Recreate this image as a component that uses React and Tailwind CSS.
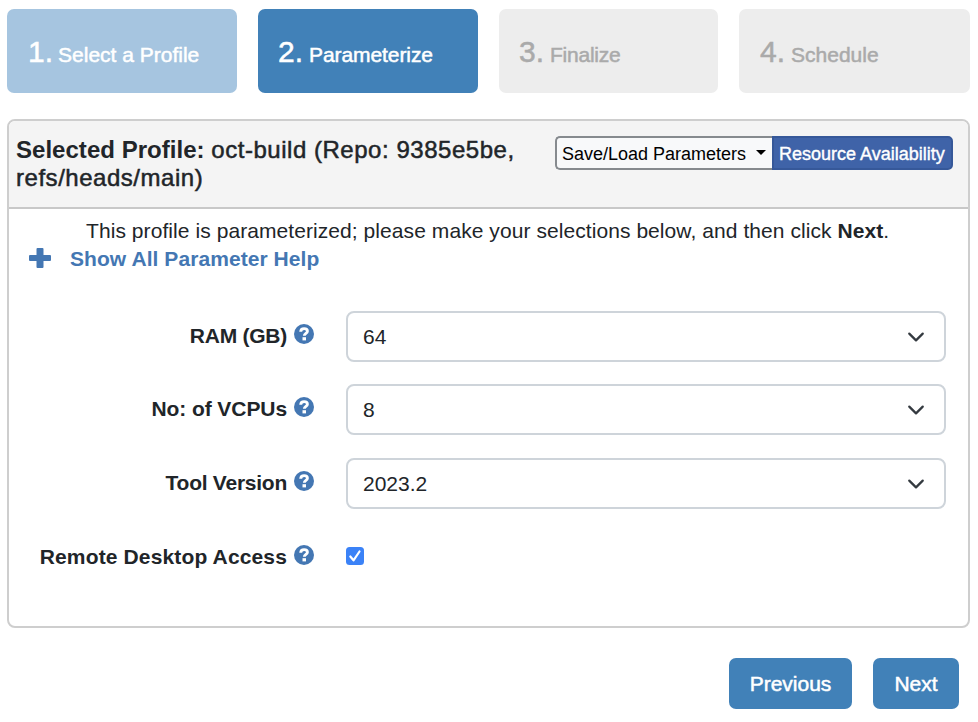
import React from 'react';

const steps = [
  { n: '1.', label: 'Select a Profile', box: 'w-[230px] gap-[5px] bg-[#a6c5e0] text-white', num: 'pl-[21px]', text: '' },
  { n: '2.', label: 'Parameterize', box: 'w-[220px] gap-[6px] bg-[#4181b8] text-white', num: 'pl-[20px]', text: 'tracking-[-0.08px]' },
  { n: '3.', label: 'Finalize', box: 'w-[219px] gap-[6px] bg-[#ededed] text-[#aaaaaa]', num: 'pl-[20px]', text: 'tracking-[-0.25px]' },
  { n: '4.', label: 'Schedule', box: 'w-[231px] gap-[6px] bg-[#ededed] text-[#aaaaaa]', num: 'pl-[21px]', text: '' },
];

function HelpIcon() {
  return (
    <svg className="block h-5 w-5 shrink-0" viewBox="0 0 20 20">
      <circle cx="10" cy="10" r="10" fill="#4477b3" />
      <path d="M6.7 7.700C6.800 5.500 8.200 4.600 10.100 4.600c2 0 3.300 1 3.300 2.600 0 2.200-3.100 2.200-3.100 4.600" fill="none" stroke="#fff" strokeWidth="2.900" />
      <rect x="8.500" y="13.200" width="3.500" height="3.200" fill="#fff" />
    </svg>
  );
}

function Label({ children, tracking }) {
  return (
    <div className="flex h-6 w-[305px] justify-end gap-[7px] pt-[2px] text-[21px] font-bold leading-6">
      <span className={'whitespace-nowrap ' + tracking}>{children}</span>
      <HelpIcon />
    </div>
  );
}

function SelectRow({ label, tracking, value, height }) {
  return (
    <div className={'flex items-start ' + height}>
      <div className="pt-[11px]"><Label tracking={tracking}>{label}</Label></div>
      <div className="ml-8 flex h-[51px] w-[600px] items-center justify-between rounded-[8px] border-2 border-[#ced4da] bg-white pl-[15px] pr-[19px] text-[21px]">
        <span>{value}</span>
        <svg className="h-[18px] w-[18px]" viewBox="0 0 16 16" fill="none" stroke="#343a40" strokeWidth="2" strokeLinecap="round" strokeLinejoin="round">
          <path d="m2 5 6 6 6-6" />
        </svg>
      </div>
    </div>
  );
}

export default function App() {
  return (
    <div className="h-[722px] w-[978px] overflow-hidden bg-white pl-[7px] pr-[8px] pt-[9px] font-['Liberation_Sans',Arial,sans-serif] text-[#212529]">
      <div className="flex justify-between">
        {steps.map((s) => (
          <div key={s.n} className={'flex h-[84px] items-baseline whitespace-nowrap rounded-[7px] pt-[25px] ' + s.box}>
            <span className={'text-[30px] leading-9 [-webkit-text-stroke:0.5px] ' + s.num}>{s.n}</span>
            <span className={'text-[21px] leading-6 [-webkit-text-stroke:0.5px] ' + s.text}>{s.label}</span>
          </div>
        ))}
      </div>

      <div className="mt-[26px] h-[509px] overflow-hidden rounded-[8px] border-2 border-[#cecece] bg-white">
        <div className="flex h-[88px] items-start justify-between border-b-2 border-[#c8c8c8] bg-[#f4f4f4] pl-[7px] pr-[15px] pt-[15px]">
          <h1 className="text-[24px] leading-7 tracking-[0.53px] [-webkit-text-stroke:0.5px]">
            <span className="block whitespace-nowrap"><b className="tracking-[0.03px] [-webkit-text-stroke:0px]">Selected Profile: </b>oct-build (Repo: 9385e5be,</span>
            <span className="block whitespace-nowrap">refs/heads/main)</span>
          </h1>
          <div className="flex h-[34px] text-[18px]">
            <button className="flex w-[217px] items-center justify-between whitespace-nowrap rounded-l-[5px] border-2 border-r-0 border-[#868a8e] bg-[#f8f9fa] pl-[5px] pr-[6px] text-black">
              <span className="pt-[2px]">Save/Load Parameters</span>
              <svg className="mb-[2px] h-[5px] w-[10px]" viewBox="0 0 10 5"><path d="M0 0h10L5 5z" fill="#000" /></svg>
            </button>
            <button className="flex w-[181px] items-center whitespace-nowrap rounded-r-[5px] border-2 border-[#365899] bg-[#3f63a8] pl-[5px] text-white [-webkit-text-stroke:0.4px]">
              <span className="pt-[2px]">Resource Availability</span>
            </button>
          </div>
        </div>

        <p className="mt-[8px] whitespace-nowrap pl-[77px] text-[21px] leading-7 tracking-[0.07px]">
          This profile is parameterized; please make your selections below, and then click <b>Next</b>.
        </p>
        <div className="flex h-7 items-center pl-[20px] text-[21px] font-bold text-[#4477b3]">
          <svg className="mb-[2px] h-5 w-[22px]" viewBox="0 0 22 20"><path d="M8.500 0h5a1 1 0 0 1 1 1v6H21a1 1 0 0 1 1 1v4a1 1 0 0 1-1 1h-6.500v6a1 1 0 0 1-1 1h-5a1 1 0 0 1-1-1v-6H1a1 1 0 0 1-1-1V8a1 1 0 0 1 1-1h6.500V1a1 1 0 0 1 1-1z" fill="#4477b3" /></svg>
          <a className="ml-[19px] whitespace-nowrap tracking-[0.07px]">Show All Parameter Help</a>
        </div>

        <div className="mt-[38px]">
          <SelectRow label="RAM (GB)" tracking="tracking-[-0.25px]" value="64" height="h-[73px]" />
          <SelectRow label="No: of VCPUs" tracking="tracking-[-0.08px]" value="8" height="h-[74px]" />
          <SelectRow label="Tool Version" tracking="tracking-[-0.25px]" value="2023.2" height="h-[74px]" />
          <div className="flex items-start pt-[11px]">
            <Label tracking="tracking-[0.14px]">Remote Desktop Access</Label>
            <svg className="ml-8 mt-[4px] h-[18px] w-[18px]" viewBox="0 0 18 18">
              <rect width="18" height="18" rx="3.500" fill="#3b82f7" />
              <path d="M4.300 9.500 7.500 13.300 13.500 4.500" fill="none" stroke="#fff" strokeWidth="2.200" strokeLinecap="round" strokeLinejoin="round" />
            </svg>
          </div>
        </div>
      </div>

      <div className="mt-[30px] flex justify-end gap-[21px] pr-[11px] text-[21px] text-white [-webkit-text-stroke:0.5px]">
        <button className="h-[51px] w-[123px] rounded-[7px] bg-[#4181b8]">Previous</button>
        <button className="h-[51px] w-[86px] rounded-[7px] bg-[#4181b8]">Next</button>
      </div>
    </div>
  );
}
